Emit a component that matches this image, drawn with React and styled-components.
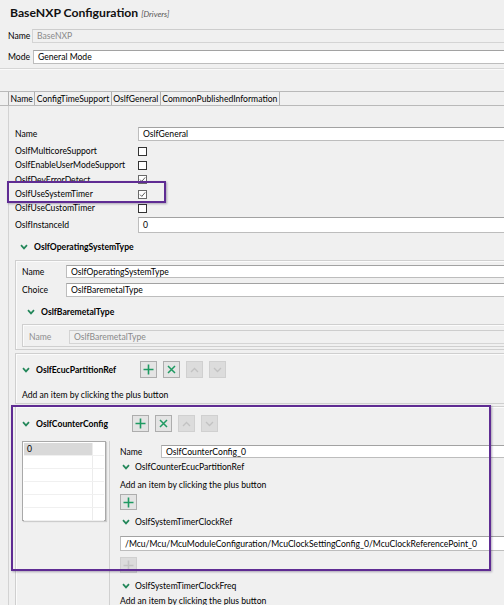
import React from 'react';
import styled, { createGlobalStyle } from 'styled-components';

const Global = createGlobalStyle`
  html, body {
    margin: 0;
    padding: 0;
    background: #f0f0f0;
  }
  body {
    width: 504px;
    height: 605px;
    overflow: hidden;
    font-family: 'Lato', 'Open Sans', sans-serif;
    font-size: 8.6px;
    color: #000;
  }
`;

const Page = styled.div`
  position: relative;
  width: 504px;
  height: 605px;
  overflow: hidden;
`;

const Header = styled.div`
  height: 28px;
  padding: 5px 0 0 10px;
  box-sizing: border-box;
  display: flex;
  align-items: baseline;
  gap: 3px;
`;

const Title = styled.span`
  font-size: 12.2px;
  font-weight: 700;
  color: #111;
`;

const Sub = styled.span`
  font-size: 8px;
  font-style: italic;
  color: #555;
`;

const TopRow = styled.div`
  display: flex;
  align-items: center;
  margin-top: ${p => p.$top || 0}px;
  padding-left: 8px;
`;

const Label = styled.span`
  width: ${p => p.$w}px;
  flex: none;
  color: ${p => (p.$disabled ? '#8f8f8f' : '#000')};
  white-space: nowrap;
`;

const Field = styled.div`
  flex: 1;
  height: ${p => p.$h || 14}px;
  box-sizing: border-box;
  display: flex;
  align-items: center;
  padding-left: 4px;
  background: ${p => (p.$disabled ? '#f0f0f0' : '#ffffff')};
  color: ${p => (p.$disabled ? '#8a8a8a' : '#000')};
  border: 1px solid ${p => (p.$disabled ? '#d4d4d4' : '#bdbdbd')};
  border-top-color: ${p => (p.$disabled ? '#cdcdcd' : '#a2a2a2')};
  border-right: none;
  white-space: nowrap;
  overflow: hidden;
`;

const Separator = styled.div`
  height: 1px;
  margin-top: 4px;
  background: #d6d6d6;
  border-bottom: 1px solid #fafafa;
`;

const TabBar = styled.div`
  display: flex;
  margin-top: 21px;
  height: 15px;
  box-sizing: border-box;
  border-top: 1px solid #b9b9b9;
  border-bottom: 1px solid #b9b9b9;
  padding-left: 8px;
`;

const Tab = styled.div`
  display: flex;
  align-items: center;
  padding: 0 1.5px;
  border-right: 1px solid #b0b0b0;
  &:first-child {
    border-left: 1px solid #b0b0b0;
  }
  white-space: nowrap;
`;

const Panel = styled.div`
  margin-left: 8px;
  border-left: 1px solid #d3d3d3;
  padding: 21px 0 40px 6px;
  display: flex;
  flex-direction: column;
`;

const FormRow = styled.div`
  display: flex;
  align-items: center;
  flex: none;
  height: ${p => p.$h || 14}px;
  margin-top: ${p => p.$top || 0}px;
`;

const Check = styled.span`
  width: 9px;
  height: 9px;
  box-sizing: border-box;
  border: 1px solid ${p => (p.$checked ? '#6a6a6a' : '#333')};
  background: #fff;
  display: flex;
  align-items: center;
  justify-content: center;
`;

const SectionHead = styled.div`
  display: flex;
  align-items: center;
  flex: none;
  gap: ${p => p.$gap || 24}px;
  height: ${p => p.$h || 14}px;
  margin-top: ${p => p.$top || 0}px;
  padding-left: ${p => (p.$pad === undefined ? 5 : p.$pad)}px;
`;

const HeadTitle = styled.span`
  display: flex;
  align-items: center;
  gap: 6px;
  font-weight: 700;
  white-space: nowrap;
`;

const Box = styled.div`
  flex: none;
  margin-top: ${p => p.$top || 0}px;
  border: 1px solid #cfcfcf;
  border-right: none;
  box-shadow: inset 1px 1px 0 #fbfbfb;
  padding: ${p => p.$pad || '4px 0 2px 6px'};
  display: flex;
  flex-direction: column;
`;

const Buttons = styled.div`
  display: flex;
  gap: 6px;
`;

const IconButton = styled.span`
  width: 17px;
  height: ${p => p.$h || 17}px;
  box-sizing: border-box;
  border: 1px solid ${p => (p.$disabled ? '#d0d0d0' : '#adadad')};
  background: ${p => (p.$disabled ? '#dcdcdc' : '#e4e4e4')};
  display: flex;
  align-items: center;
  justify-content: center;
  flex: none;
`;

const ButtonSlot = styled.div`
  display: flex;
  flex: none;
  margin-top: ${p => p.$top || 0}px;
`;

const Hint = styled.div`
  height: 12px;
  flex: none;
  display: flex;
  align-items: center;
  margin-top: ${p => p.$top || 0}px;
  white-space: nowrap;
`;

const Split = styled.div`
  display: flex;
  margin-top: 9px;
`;

const List = styled.div`
  width: 84px;
  height: 80px;
  flex: none;
  box-sizing: border-box;
  background: #fff;
  border: 1px solid #a9a9a9;
  box-shadow: 1px 1px 1px rgba(0, 0, 0, 0.15);
  padding: 1px;
  display: flex;
  flex-direction: column;
`;

const ListRow = styled.div`
  height: 13px;
  flex: none;
  box-sizing: border-box;
  display: grid;
  grid-template-columns: 69px 1fr;
  border-bottom: 1px solid #f0f0f0;
`;

const Cell = styled.span`
  display: flex;
  align-items: center;
  padding-left: 3px;
  background: ${p => (p.$selected ? '#d9d9d9' : 'transparent')};
  border-right: ${p => (p.$first ? '1px solid #ececec' : 'none')};
`;

const Detail = styled.div`
  flex: 1;
  margin-left: 3px;
  border-left: 1px solid #d0d0d0;
  padding: 4px 0 0 10px;
  display: flex;
  flex-direction: column;
  height: 180px;
`;

const SubHead = styled.div`
  display: flex;
  align-items: center;
  flex: none;
  gap: 5px;
  height: 12px;
  padding-left: 2px;
  margin-top: ${p => p.$top || 0}px;
  white-space: nowrap;
`;

const Spacer = styled.div`
  height: ${p => p.$h}px;
  flex: none;
`;

const Highlight = styled.div`
  position: absolute;
  left: ${p => p.$x}px;
  top: ${p => p.$y}px;
  width: ${p => p.$w}px;
  height: ${p => p.$h}px;
  box-sizing: border-box;
  border: 2px solid #5f2c93;
  box-shadow: 1px 1px 2px rgba(40, 20, 70, 0.35);
  pointer-events: none;
`;

const Chevron = () => (
  <svg width="8" height="6" viewBox="0 0 8 6">
    <polyline points="1,1.2 4,4.4 7,1.2" fill="none" stroke="#23875a" strokeWidth="1.7" />
  </svg>
);

const Tick = () => (
  <svg width="7" height="7" viewBox="0 0 7 7">
    <polyline points="1,3.6 2.8,5.4 6.2,1.4" fill="none" stroke="#5c5c5c" strokeWidth="1" />
  </svg>
);

const PlusIcon = ({ color = '#1f9a62' }) => (
  <svg width="11" height="11" viewBox="0 0 11 11">
    <path d="M5.5 0.5v10M0.5 5.5h10" stroke={color} strokeWidth="1.6" />
  </svg>
);

const CrossIcon = () => (
  <svg width="9" height="9" viewBox="0 0 9 9">
    <path d="M1 1l7 7M8 1l-7 7" stroke="#1f9a62" strokeWidth="1.5" />
  </svg>
);

const ArrowIcon = ({ up }) => (
  <svg width="9" height="6" viewBox="0 0 9 6">
    <polyline
      points={up ? '1,5 4.5,1.5 8,5' : '1,1 4.5,4.5 8,1'}
      fill="none"
      stroke="#c2c2c2"
      strokeWidth="1.3"
    />
  </svg>
);

const ToolButtons = () => (
  <Buttons>
    <IconButton><PlusIcon /></IconButton>
    <IconButton><CrossIcon /></IconButton>
    <IconButton $disabled><ArrowIcon up /></IconButton>
    <IconButton $disabled><ArrowIcon /></IconButton>
  </Buttons>
);

const checks = [
  ['OslfMulticoreSupport', false],
  ['OslfEnableUserModeSupport', false],
  ['OslfDevErrorDetect', true],
  ['OslfUseSystemTimer', true],
  ['OslfUseCustomTimer', false],
];

const App = () => {
  return (
    <Page>
      <Global />
      <Header>
        <Title>BaseNXP Configuration</Title>
        <Sub>[Drivers]</Sub>
      </Header>
      <TopRow $top={1}>
        <Label $w={24}>Name</Label>
        <Field $disabled>BaseNXP</Field>
      </TopRow>
      <TopRow $top={7}>
        <Label $w={25}>Mode</Label>
        <Field>General Mode</Field>
      </TopRow>
      <Separator />
      <TabBar>
        <Tab>Name</Tab>
        <Tab>ConfigTimeSupport</Tab>
        <Tab>OslfGeneral</Tab>
        <Tab>CommonPublishedInformation</Tab>
      </TabBar>
      <Panel>
        <FormRow>
          <Label $w={123}>Name</Label>
          <Field>OslfGeneral</Field>
        </FormRow>
        <Spacer $h={3} />
        {checks.map(([name, on]) => (
          <FormRow key={name} $h={14.3}>
            <Label $w={123}>{name}</Label>
            <Check $checked={on}>{on && <Tick />}</Check>
          </FormRow>
        ))}
        <FormRow $top={2} $h={16}>
          <Label $w={123}>OslfInstanceId</Label>
          <Field $h={16}>0</Field>
        </FormRow>

        <SectionHead $top={7}>
          <HeadTitle><Chevron />OslfOperatingSystemType</HeadTitle>
        </SectionHead>
        <Box $top={6}>
          <FormRow $h={13}>
            <Label $w={44}>Name</Label>
            <Field $h={13}>OslfOperatingSystemType</Field>
          </FormRow>
          <FormRow $top={5}>
            <Label $w={44}>Choice</Label>
            <Field>OslfBaremetalType</Field>
          </FormRow>
          <SectionHead $top={8}>
            <HeadTitle><Chevron />OslfBaremetalType</HeadTitle>
          </SectionHead>
          <Box $top={5} $pad="5px 0 2px 6px">
            <FormRow>
              <Label $w={40} $disabled>Name</Label>
              <Field $disabled>OslfBaremetalType</Field>
            </FormRow>
          </Box>
        </Box>

        <Box $top={3} $pad="7px 0 2px 6px">
          <SectionHead $h={17} $pad={0}>
            <HeadTitle><Chevron />OslfEcucPartitionRef</HeadTitle>
            <ToolButtons />
          </SectionHead>
          <Hint $top={11}>Add an item by clicking the plus button</Hint>
        </Box>

        <Box $top={2} $pad="8px 0 0 6px">
          <SectionHead $h={17} $pad={0}>
            <HeadTitle><Chevron />OslfCounterConfig</HeadTitle>
            <ToolButtons />
          </SectionHead>
          <Split>
            <List>
              {[0, 1, 2, 3, 4, 5].map(i => (
                <ListRow key={i}>
                  <Cell $first $selected={i === 0}>{i === 0 ? '0' : ''}</Cell>
                  <Cell />
                </ListRow>
              ))}
            </List>
            <Detail>
              <FormRow $h={13}>
                <Label $w={41}>Name</Label>
                <Field $h={13}>OslfCounterConfig_0</Field>
              </FormRow>
              <SubHead $top={3}>
                <Chevron />OslfCounterEcucPartitionRef
              </SubHead>
              <Hint $top={6}>Add an item by clicking the plus button</Hint>
              <ButtonSlot $top={3}>
                <IconButton $h={16}><PlusIcon /></IconButton>
              </ButtonSlot>
              <SubHead $top={6}>
                <Chevron />OslfSystemTimerClockRef
              </SubHead>
              <FormRow $top={8} $h={15}>
                <Field $h={15}>/Mcu/Mcu/McuModuleConfiguration/McuClockSettingConfig_0/McuClockReferencePoint_0</Field>
              </FormRow>
              <ButtonSlot $top={6}>
                <IconButton $disabled $h={16}><PlusIcon color="#c4c4c4" /></IconButton>
              </ButtonSlot>
              <SubHead $top={7}>
                <Chevron />OslfSystemTimerClockFreq
              </SubHead>
              <Hint $top={3}>Add an item by clicking the plus button</Hint>
            </Detail>
          </Split>
        </Box>
      </Panel>
      <Highlight $x={7} $y={181} $w={159} $h={22} />
      <Highlight $x={11} $y={405} $w={480} $h={166} />
    </Page>
  );
};

export default App;
